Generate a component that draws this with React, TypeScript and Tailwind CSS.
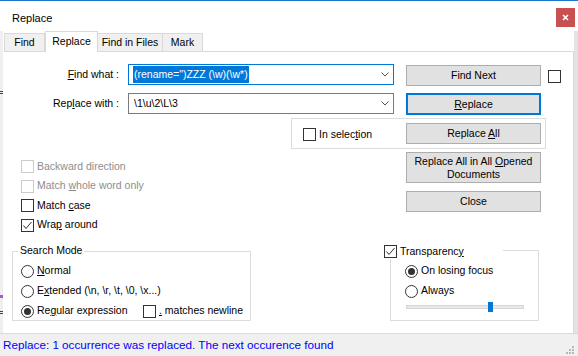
import React from 'react';

function CheckBox({ checked = false, disabled = false }: { checked?: boolean; disabled?: boolean }) {
  return (
    <span
      className={`flex h-[13px] w-[13px] shrink-0 items-center justify-center border bg-white ${
        disabled ? 'border-[#cccccc]' : 'border-[#333333]'
      }`}
    >
      {checked && (
        <svg width="11" height="11" viewBox="0 0 11 11">
          <path d="M1.5 5.5L4 8.5L9.5 2" fill="none" stroke="#333333" strokeWidth="1" />
        </svg>
      )}
    </span>
  );
}

function Radio({ checked = false }: { checked?: boolean }) {
  return (
    <span className="flex h-[13px] w-[13px] shrink-0 items-center justify-center rounded-full border border-[#333333] bg-white">
      {checked && <span className="h-[7px] w-[7px] rounded-full bg-[#333333]" />}
    </span>
  );
}

function DlgButton({ children, focused, tall }: { children: React.ReactNode; focused?: boolean; tall?: boolean }) {
  const size = tall ? 'h-[31px]' : focused ? 'h-[22px]' : 'h-[21px]';
  const edge = focused ? 'border-2 border-[#0078d7]' : 'border border-[#adadad]';
  return (
    <div className={`flex w-[135px] shrink-0 items-center justify-center bg-[#e1e1e1] text-center leading-[13px] ${size} ${edge}`}>
      <span>{children}</span>
    </div>
  );
}

function Combo({ children, focused }: { children: React.ReactNode; focused?: boolean }) {
  return (
    <div
      className={`flex h-[21px] w-[266px] shrink-0 items-center justify-between border bg-white pl-[4px] pr-[4px] ${
        focused ? 'border-[#0078d7]' : 'border-[#7a7a7a]'
      }`}
    >
      <span className="flex items-center">{children}</span>
      <svg width="8" height="5" viewBox="0 0 8 5">
        <path d="M0.5 0.5L4 4L7.5 0.5" fill="none" stroke="#555555" strokeWidth="1" />
      </svg>
    </div>
  );
}

export default function App() {
  return (
    <div className="flex h-[356px] w-[578px] flex-col overflow-hidden bg-white font-['Liberation_Sans',Arial,sans-serif] text-[10.5px] text-black">
      <div className="h-px bg-[#1d76c9]" />

      {/* title bar */}
      <div className="flex h-[30px] items-start justify-between">
        <span className="pl-[12px] pt-[9px] text-[11px]">Replace</span>
        <div className="mr-[3px] mt-[7px] flex h-[19px] w-[19px] items-center justify-center bg-[#c75050]">
          <svg width="7" height="7" viewBox="0 0 7 7">
            <path d="M1 1L6 6M6 1L1 6" stroke="#ffffff" strokeWidth="1.6" />
          </svg>
        </div>
      </div>

      <div className="flex flex-1">
        {/* strip of the editor behind */}
        <div className="flex w-[3px] flex-col bg-[#efefef]">
          <div className="mt-[60px] h-px w-[3px] bg-[#444444]" />
          <div className="mt-px h-px w-[3px] bg-[#444444]" />
          <div className="mt-[201px] h-[3px] w-[3px] bg-[#a35ad6]" />
          <div className="mt-[13px] h-px w-[3px] bg-[#444444]" />
          <div className="mt-px h-px w-[3px] bg-[#444444]" />
        </div>

        <div className="flex w-[571px] flex-col">
          {/* tabs */}
          <div className="flex h-[20px] items-end pl-px">
            <div className="flex h-[18px] w-[41px] items-center justify-center border border-b-0 border-[#d9d9d9] bg-[#f0f0f0]">Find</div>
            <div className="relative z-10 -mb-px flex h-[21px] w-[53px] items-center justify-center border border-b-0 border-[#d9d9d9] bg-white">Replace</div>
            <div className="flex h-[18px] w-[65px] items-center justify-center border border-b-0 border-l-0 border-[#d9d9d9] bg-[#f0f0f0]">Find in Files</div>
            <div className="flex h-[18px] w-[40px] items-center justify-center border border-b-0 border-l-0 border-[#d9d9d9] bg-[#f0f0f0]">Mark</div>
          </div>

          {/* tab page */}
          <div className="ml-px flex h-[282px] w-[570px] flex-col border-r border-t border-[#d9d9d9]">
            <div className="mt-[12px] flex items-start">
              <div className="flex h-[21px] w-[115px] items-center justify-end">
                <span><u>F</u>ind what :</span>
              </div>
              <div className="ml-[9px]">
                <Combo focused>
                  <span className="bg-[#0078d7] px-px leading-[17px] text-white">(rename=")ZZZ (\w)(\w*)</span>
                </Combo>
              </div>
              <div className="ml-[12px] mt-px">
                <DlgButton>Find Next</DlgButton>
              </div>
              <div className="ml-[7px] mt-[6px]">
                <CheckBox />
              </div>
            </div>

            <div className="mt-[7px] flex items-start">
              <div className="flex h-[21px] w-[115px] items-center justify-end">
                <span>Rep<u>l</u>ace with :</span>
              </div>
              <div className="ml-[9px]">
                <Combo>
                  <span className="px-px">\1\u\2\L\3</span>
                </Combo>
              </div>
              <div className="ml-[12px]">
                <DlgButton focused>
                  <u>R</u>eplace
                </DlgButton>
              </div>
            </div>

            <div className="ml-[287px] mt-[3px] flex h-[31px] w-[255px] items-start border border-[#dcdcdc]">
              <div className="mt-[8px] flex w-[114px] items-center gap-[3px] pl-[11px]">
                <CheckBox />
                <span>In selec<u>t</u>ion</span>
              </div>
              <div className="mt-[4px]">
                <DlgButton>
                  Replace <u>A</u>ll
                </DlgButton>
              </div>
            </div>

            <div className="mt-[3px] flex items-start">
              <div className="ml-[17px] flex w-[385px] flex-col pt-[5px]">
                <div className="flex h-[19.5px] items-center gap-[3px] text-[#8d8d8d]">
                  <CheckBox disabled />
                  <span>Backward direction</span>
                </div>
                <div className="flex h-[19.5px] items-center gap-[3px] text-[#8d8d8d]">
                  <CheckBox disabled />
                  <span>Match <u>w</u>hole word only</span>
                </div>
                <div className="flex h-[19.5px] items-center gap-[3px]">
                  <CheckBox />
                  <span>Match <u>c</u>ase</span>
                </div>
                <div className="flex h-[19.5px] items-center gap-[3px]">
                  <CheckBox checked />
                  <span>Wra<u>p</u> around</span>
                </div>
              </div>
              <div className="flex flex-col gap-[8px]">
                <DlgButton tall>
                  Replace All in All <u>O</u>pened
                  <br />
                  Documents
                </DlgButton>
                <DlgButton>Close</DlgButton>
              </div>
            </div>

            <div className="flex items-start">
              {/* search mode */}
              <div className="relative ml-[8px] mt-[16px] h-[70px] w-[239px] border border-[#dcdcdc] pl-[8px] pt-[9px]">
                <div className="absolute -top-[8px] left-[5px] flex h-[14px] items-center bg-white px-[2px]">Search Mode</div>
                <div className="flex h-[20px] items-center gap-[3px]">
                  <Radio />
                  <span><u>N</u>ormal</span>
                </div>
                <div className="flex h-[20px] items-center gap-[3px]">
                  <Radio />
                  <span>E<u>x</u>tended (\n, \r, \t, \0, \x...)</span>
                </div>
                <div className="flex h-[20px] items-center">
                  <div className="flex w-[122px] items-center gap-[3px]">
                    <Radio checked />
                    <span>Re<u>g</u>ular expression</span>
                  </div>
                  <div className="flex items-center gap-[3px]">
                    <CheckBox />
                    <span><u>.</u> matches newline</span>
                  </div>
                </div>
              </div>

              {/* transparency */}
              <div className="relative ml-[139px] mt-[15px] h-[71px] w-[149px] border border-[#dcdcdc] pl-[14px] pt-[10px]">
                <div className="absolute -left-[7px] -top-[7px] flex h-[15px] w-[119px] items-center gap-[3px] bg-white">
                  <CheckBox checked />
                  <span>Transparenc<u>y</u></span>
                </div>
                <div className="flex h-[20px] items-center gap-[3px]">
                  <Radio checked />
                  <span>On losing focus</span>
                </div>
                <div className="flex h-[20px] items-center gap-[3px]">
                  <Radio />
                  <span>Always</span>
                </div>
                <div className="relative ml-px mt-px flex h-[10px] w-[118px] items-center">
                  <div className="h-[4px] w-full border border-[#d6d6d6] bg-[#e7eaea]" />
                  <div className="absolute left-[82px] top-0 h-[10px] w-[5px] bg-[#0078d7]" />
                </div>
              </div>
            </div>
          </div>
        </div>

        <div className="w-[4px] bg-[#e3e3e3]" />
      </div>

      {/* status bar */}
      <div className="flex h-[23px] items-center justify-between border-t border-[#dadada] bg-[#f0f0f0] pl-[3px] pr-[4px]">
        <span className="text-[11.7px] text-[#0000ff]">Replace: 1 occurrence was replaced. The next occurence found</span>
        <svg width="9" height="9" viewBox="0 0 9 9" className="mt-[8px]">
          <rect x="7" y="1" width="2" height="2" fill="#b8b8b8" />
          <rect x="4" y="4" width="2" height="2" fill="#b8b8b8" />
          <rect x="7" y="4" width="2" height="2" fill="#b8b8b8" />
          <rect x="1" y="7" width="2" height="2" fill="#b8b8b8" />
          <rect x="4" y="7" width="2" height="2" fill="#b8b8b8" />
          <rect x="7" y="7" width="2" height="2" fill="#b8b8b8" />
        </svg>
      </div>
    </div>
  );
}
